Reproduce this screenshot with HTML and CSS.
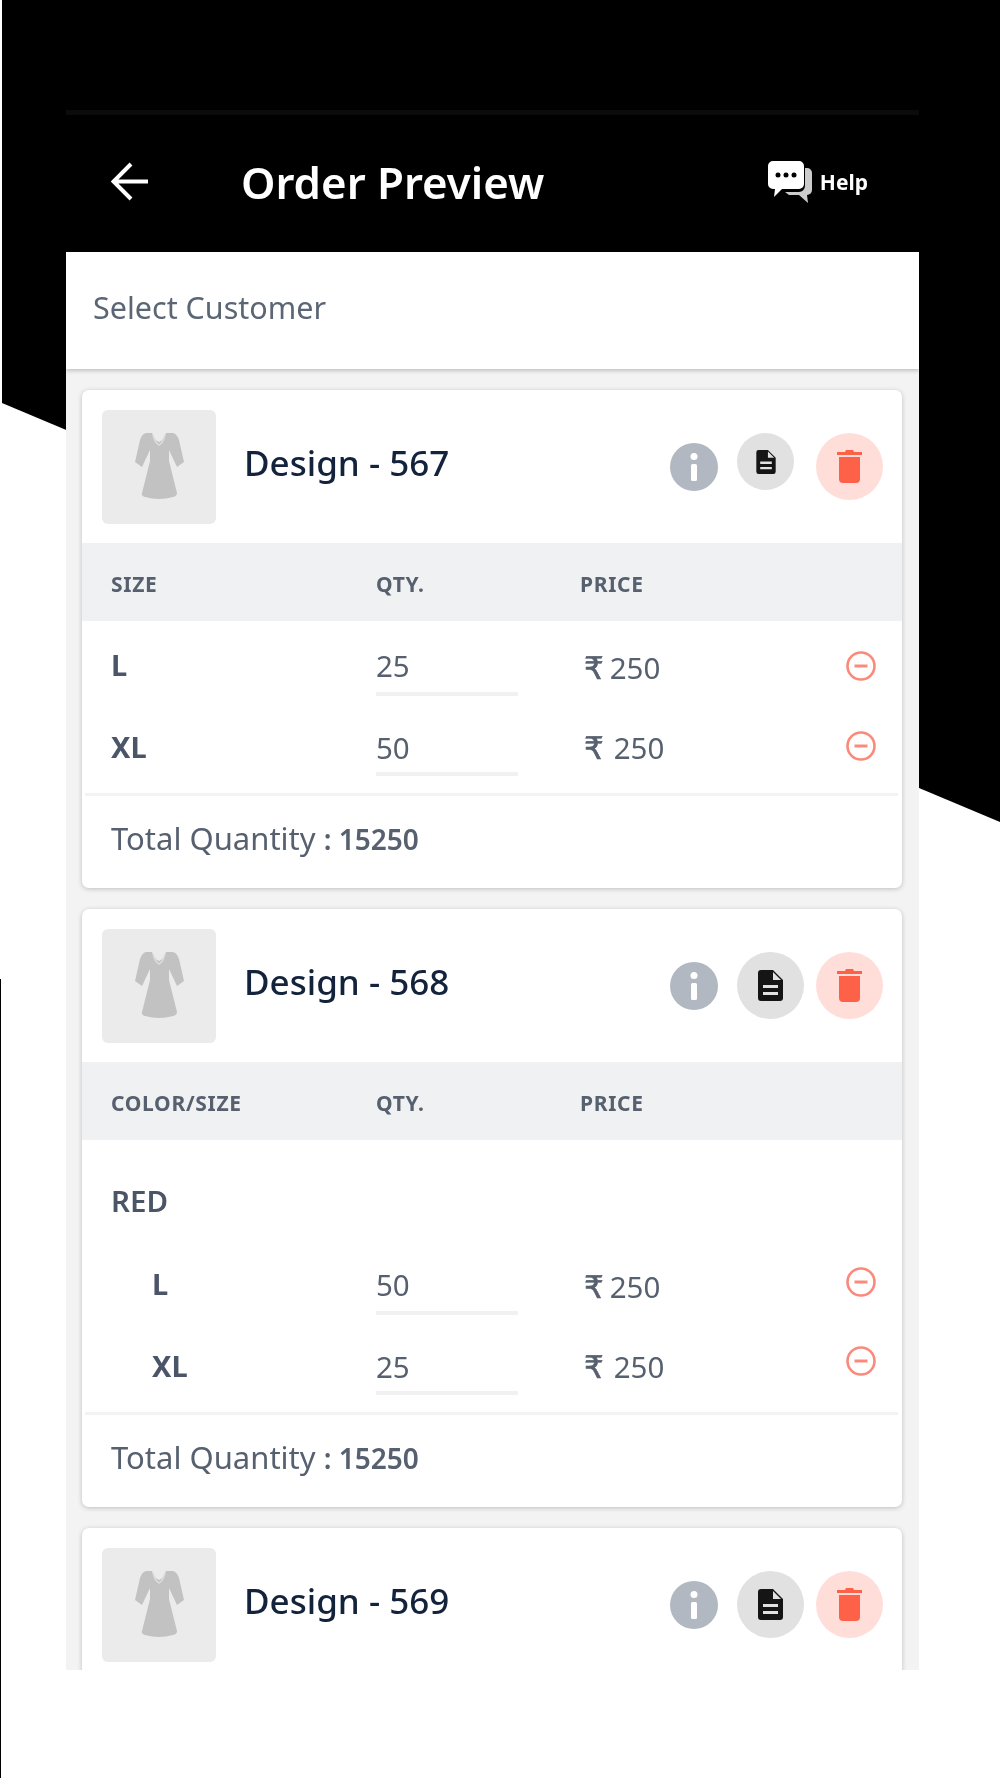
FILE: index.html
```html
<!doctype html>
<html>
<head>
<meta charset="UTF-8" />
<title>Order Preview</title>
<link rel="stylesheet" href="styles.css">
</head>
<body>
	<svg class="defs" width="0" height="0">
		<symbol id="dress" viewBox="0 0 49 67">
			<path d="M11 0L17 0Q19 7 24 9Q29 7 31 0L38 0Q42 1 44 7L49 29L42 34L34 17L34 28L42 60Q42 63 38 64Q24 68 10 64Q6 63 7 60L15 28L15 17L7 34L0 29L5 7Q7 1 11 0Z"/>
			<path d="M18 2Q20 10 24 12Q28 10 30 2" fill="none" stroke="#dcdcdc" stroke-width="1.500"/>
		</symbol>
		<symbol id="doc" viewBox="0 0 25 31">
			<path fill-rule="evenodd" d="M3 0h12l10 10v18a3 3 0 0 1-3 3H3a3 3 0 0 1-3-3V3a3 3 0 0 1 3-3zM15 2v8h8zM5 15v3h15v-3zM5 22v3h15v-3z"/>
		</symbol>
		<symbol id="trash" viewBox="0 0 25 33">
			<path d="M9 0h7l1 2h8v3H0V2h8zM2 7h21v22a4 4 0 0 1-4 4H6a4 4 0 0 1-4-4z"/>
		</symbol>
		<symbol id="minus" viewBox="0 0 30 30">
			<circle cx="15" cy="15" r="13.5" fill="none" stroke="currentColor" stroke-width="2.6"/>
			<path d="M8.5 15h13" stroke="currentColor" stroke-width="3"/>
		</symbol>
		<symbol id="info" viewBox="0 0 48 48">
			<circle cx="24" cy="24" r="24" fill="#b2b8c1"/>
			<circle cx="24" cy="13.500" r="3.500" fill="#fff"/>
			<rect x="21" y="21" width="6" height="17" rx="1.500" fill="#fff"/>
		</symbol>
	</svg>

	<div class="backdrop"></div>
	<div class="edge-line"></div>

	<div class="phone">
		<div class="status-line"></div>
		<div class="topbar">
			<svg class="back" viewBox="0 0 39 39"><path d="M37 19.500H3M20 2L2.500 19.500 20 37" fill="none" stroke="#fff" stroke-width="4"/></svg>
			<h1>Order Preview</h1>
			<div class="help">
				<svg class="help-icon" viewBox="0 0 46 44">
					<path d="M38 8h2a5 5 0 0 1 5 5v17a5 5 0 0 1-5 5l1 8-9-8H22l-4-3h14a6 6 0 0 0 6-6z" fill="#fff" opacity=".8"/>
					<path d="M6 1h26a5 5 0 0 1 5 5v18a5 5 0 0 1-5 5H15l-8 8 1-8H6a5 5 0 0 1-5-5V6a5 5 0 0 1 5-5z" fill="#fff"/>
					<circle cx="11" cy="15" r="2.500"/><circle cx="19" cy="15" r="2.500"/><circle cx="27" cy="15" r="2.500"/>
				</svg>
				<span>Help</span>
			</div>
		</div>
		<div class="customer">Select Customer</div>

		<div class="list">
			<div class="card">
				<div class="card-head">
					<div class="thumb"><svg class="dress"><use href="#dress"/></svg></div>
					<div class="name">Design - 567</div>
					<svg class="info"><use href="#info"/></svg>
					<div class="btn btn-doc small"><svg><use href="#doc"/></svg></div>
					<div class="btn btn-trash"><svg><use href="#trash"/></svg></div>
				</div>
				<div class="cols"><span>SIZE</span><span>QTY.</span><span>PRICE</span></div>
				<div class="rows">
					<div class="row">
						<b>L</b><div class="qty">25</div><div class="price"><em>₹</em>250</div>
						<svg class="minus"><use href="#minus"/></svg>
					</div>
					<div class="row">
						<b>XL</b><div class="qty">50</div><div class="price"><em class="wide">₹</em>250</div>
						<svg class="minus"><use href="#minus"/></svg>
					</div>
				</div>
				<div class="total">Total Quantity <b>: 15250</b></div>
			</div>

			<div class="card">
				<div class="card-head">
					<div class="thumb"><svg class="dress"><use href="#dress"/></svg></div>
					<div class="name">Design - 568</div>
					<svg class="info"><use href="#info"/></svg>
					<div class="btn btn-doc"><svg><use href="#doc"/></svg></div>
					<div class="btn btn-trash"><svg><use href="#trash"/></svg></div>
				</div>
				<div class="cols"><span>COLOR/SIZE</span><span>QTY.</span><span>PRICE</span></div>
				<div class="rows">
					<div class="color">RED</div>
					<div class="row sub">
						<b>L</b><div class="qty">50</div><div class="price"><em>₹</em>250</div>
						<svg class="minus"><use href="#minus"/></svg>
					</div>
					<div class="row sub">
						<b>XL</b><div class="qty">25</div><div class="price"><em class="wide">₹</em>250</div>
						<svg class="minus"><use href="#minus"/></svg>
					</div>
				</div>
				<div class="total">Total Quantity <b>: 15250</b></div>
			</div>

			<div class="card">
				<div class="card-head">
					<div class="thumb"><svg class="dress"><use href="#dress"/></svg></div>
					<div class="name">Design - 569</div>
					<svg class="info"><use href="#info"/></svg>
					<div class="btn btn-doc"><svg><use href="#doc"/></svg></div>
					<div class="btn btn-trash"><svg><use href="#trash"/></svg></div>
				</div>
			</div>
		</div>
	</div>
</body>
</html>
```

FILE: styles.css
```css
html, body, h1, div{
	margin:0;
	padding:0;
}
body{
	position:relative;
	height:1778px;
	overflow:hidden;
	background:#fff;
	font-family:"Noto Sans", sans-serif;
	color:#56606f;
}
.defs{
	position:absolute;
}
.backdrop{
	position:absolute;
	inset:0;
	background:#000;
	clip-path:polygon(2px 0, 100% 0, 100% 822px, 2px 403px);
}
.edge-line{
	position:absolute;
	left:0;
	top:979px;
	bottom:0;
	width:1px;
	background:#000;
}
.phone{
	position:relative;
	width:853px;
	height:1670px;
	margin-left:66px;
	overflow:hidden;
}
.status-line{
	height:5px;
	border-top:110px solid #000;
	background:#0b0b0b;
}
.topbar{
	display:flex;
	align-items:center;
	height:137px;
	padding:0 0 4px 45px;
	box-sizing:border-box;
	color:#fff;
	filter:blur(.5px);
}
.back{
	width:39px;
	height:39px;
	margin-right:91px;
}
h1{
	flex:1;
	font-size:43.800px;
	font-weight:600;
}
.help{
	display:flex;
	align-items:center;
	padding-right:51px;
	font-size:21px;
	font-weight:700;
}
.help-icon{
	width:46px;
	height:44px;
	margin:0 7px 0 -2px;
}
.customer{
	position:relative;
	height:117px;
	line-height:110px;
	padding-left:27px;
	background:#fff;
	font-size:30.500px;
	color:#5b6675;
	box-shadow:0 2px 4px rgba(0,0,0,.2);
	filter:blur(.5px);
}
.list{
	height:1301px;
	padding:21px 17px 0 16px;
	background:#f3f3f3;
}
.card{
	margin-bottom:21px;
	background:#fff;
	border-radius:7px;
	box-shadow:0 1px 5px rgba(0,0,0,.22);
	filter:blur(.5px);
}
.card-head{
	display:flex;
	align-items:center;
	height:153px;
	padding:0 19px 0 20px;
	box-sizing:border-box;
}
.thumb{
	display:flex;
	align-items:center;
	justify-content:center;
	width:114px;
	height:114px;
	border-radius:6px;
	background:#ebebeb;
}
.dress{
	width:49px;
	height:67px;
	fill:#c2c2c2;
}
.name{
	flex:1;
	margin:-9px 0 0 28px;
	font-size:35px;
	font-weight:500;
	color:#14233c;
}
.info{
	width:48px;
	height:48px;
	margin-right:19px;
}
.btn{
	display:flex;
	align-items:center;
	justify-content:center;
	width:67px;
	height:67px;
	border-radius:50%;
}
.btn-doc{
	margin-right:12px;
	background:#e1e1e1;
}
.btn-doc svg{
	width:25px;
	height:31px;
	fill:#151515;
}
.btn-doc.small{
	width:57px;
	height:57px;
	margin:-10px 22px 0 0;
}
.btn-doc.small svg{
	width:20px;
	height:24px;
}
.btn-trash{
	background:#ffdeda;
}
.btn-trash svg{
	width:25px;
	height:33px;
	fill:#fd6148;
}
.cols{
	display:grid;
	grid-template-columns:265px 204px 1fr;
	align-items:center;
	height:78px;
	padding:3px 0 0 29px;
	box-sizing:border-box;
	background:#f0f1f3;
	font-size:21px;
	font-weight:700;
	letter-spacing:.7px;
}
.rows{
	padding-top:19px;
}
.row{
	display:grid;
	grid-template-columns:265px 142px 1fr 30px;
	align-items:center;
	height:56px;
	margin-bottom:24px;
	padding:0 26px 0 29px;
	font-size:29.500px;
}
.row:last-child{
	margin-bottom:17px;
}
.row:last-child .qty{
	line-height:55px;
}
.row b{
	margin-top:-8px;
	font-size:29px;
	font-weight:700;
	color:#4a5568;
}
.row:last-child b{
	margin-top:-3px;
}
.row.sub{
	grid-template-columns:224px 142px 1fr 30px;
	padding-left:70px;
}
.qty{
	height:56px;
	line-height:52px;
	border-bottom:4px solid #f1f1f1;
	box-sizing:border-box;
}
.price{
	padding-left:66px;
	margin-top:-2px;
}
.price em{
	margin-right:6px;
	font-family:"DejaVu Sans", sans-serif;
	font-style:normal;
	font-size:31px;
	line-height:1;
	-webkit-text-stroke:.6px #56606f;
}
.price em.wide{
	margin-right:10px;
}
.minus{
	width:30px;
	height:30px;
	margin-top:-4px;
	color:#fb8a7c;
}
.row.sub .minus{
	margin-top:-11px;
}
.row.sub:last-child .minus{
	margin-top:-13px;
}
.color{
	height:81px;
	padding-top:19px;
	line-height:46px;
	padding-left:29px;
	font-size:29.500px;
	font-weight:600;
	color:#4a5568;
}
.total{
	height:92px;
	line-height:84px;
	margin:0 4px 0 3px;
	padding-left:26px;
	border-top:3px solid #f3f3f3;
	font-size:31px;
}
.total b{
	font-size:28px;
	font-weight:600;
}
```
